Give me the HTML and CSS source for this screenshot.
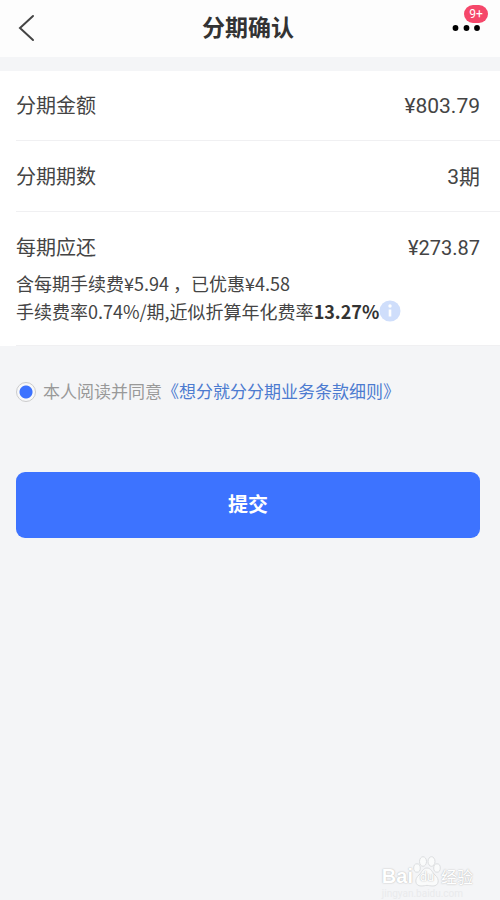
FILE: index.html
```html
<!DOCTYPE html>
<html lang="zh-CN">
<head>
<meta charset="utf-8">
<meta name="viewport" content="width=device-width, initial-scale=1">
<title>分期确认</title>
<link rel="stylesheet" href="styles.css">
</head>
<body>
<header class="topbar">
  <button class="icon-button" type="button" aria-label="返回">
    <svg width="20" height="28" viewBox="0 0 20 28" fill="none" stroke="#444" stroke-width="2" stroke-linecap="round"><path d="M17 2 4 14 17 26"/></svg>
  </button>
  <h1 class="title">分期确认</h1>
  <button class="icon-button more" type="button" aria-label="更多">
    <svg width="28" height="6" viewBox="0 0 28 6" fill="#000"><circle cx="3.500" cy="3" r="2.9"/><circle cx="14.500" cy="3" r="2.9"/><circle cx="25" cy="3" r="2.9"/></svg>
    <span class="badge">9+</span>
  </button>
</header>
<main class="content">
  <section class="card">
    <div class="row"><span>分期金额</span><span class="value">¥803.79</span></div>
    <div class="row"><span>分期期数</span><span class="value">3期</span></div>
    <div class="row"><span>每期应还</span><span>¥273.87</span>
      <p class="detail">含每期手续费¥5.94 ，已优惠¥4.58<br>手续费率0.74%/期,近似折算年化费率<strong>13.27%</strong><button class="info" type="button" aria-label="费率说明"><svg width="22" height="22" viewBox="0 0 22 22"><circle cx="11" cy="11" r="10.5" fill="#cfdefb"/><circle cx="11" cy="6" r="1.7" fill="#fff"/><path d="M11 9.5v7" stroke="#fff" stroke-width="2.6"/></svg></button></p>
    </div>
  </section>
  <form class="form">
    <div class="agreement">
      <input class="radio" type="radio" id="agree" name="agree" checked>
      <label for="agree">本人阅读并同意</label><a class="terms" href="#terms">《想分就分分期业务条款细则》</a>
    </div>
    <button class="submit" type="button">提交</button>
  </form>
</main>
<footer class="watermark">
  <div class="brand">
    <span class="latin">Bai</span>
    <span class="paw">
      <svg width="28" height="32" viewBox="0 0 28 32" fill="#fafbfb" stroke="#dcdee0" stroke-width="1"><ellipse cx="4" cy="12" rx="3.300" ry="4.200"/><ellipse cx="10" cy="5.500" rx="3.500" ry="4.800"/><ellipse cx="18.500" cy="5.500" rx="3.500" ry="4.800"/><ellipse cx="24" cy="12" rx="3.300" ry="4.200"/><path d="M14 12c4 0 5 4 8 7 5 4 4 11-2 11-3 0-4-.6-6-.6s-3 .6-6 .6c-6 0-7-7-2-11 3-3 4-7 8-7Z"/></svg>
      <span class="du">du</span>
    </span>
    <span class="cjk">经验</span>
  </div>
  <div class="site">jingyan.baidu.com</div>
</footer>
</body>
</html>
```
FILE: styles.css
```css
* {
  box-sizing: border-box;
}

body {
  display: flex;
  flex-direction: column;
  min-height: 100vh;
  margin: 0;
  background: #f4f5f7;
  color: #444;
  font-family: Roboto, "Noto Sans CJK SC", sans-serif;
  font-size: 20px;
  line-height: 28px;
}

button {
  padding: 0;
  border: 0;
  background: none;
  font: inherit;
}

.topbar {
  display: flex;
  align-items: center;
  justify-content: space-between;
  height: 57px;
  padding: 0 20px 2px 16px;
  background: #fdfdfd;
}

.icon-button {
  display: flex;
  align-items: center;
  width: 32px;
  height: 32px;
}

.title {
  margin: 0;
  padding-top: 2px;
  color: #333;
  font-size: 23px;
  font-weight: 700;
  line-height: 32px;
}

.more {
  position: relative;
  justify-content: flex-end;
}

.badge {
  position: absolute;
  top: -7px;
  right: -8px;
  width: 24px;
  border-radius: 9px;
  background: #f5476a;
  color: #fff;
  font-size: 12px;
  line-height: 18px;
  text-align: center;
}

.card {
  margin-top: 14px;
  padding-left: 16px;
  background: #fff;
}

.row {
  display: flex;
  flex-wrap: wrap;
  justify-content: space-between;
  padding: 21px 20px 20px 0;
  border-bottom: 1px solid #f0f0f2;
}

.row + .row {
  padding-top: 22px;
}

.value {
  font-size: 21px;
}

.detail {
  width: 100%;
  margin: 7px 0 0;
  font-family: "Noto Sans CJK SC", sans-serif;
  font-size: 18px;
}

.detail strong {
  color: #333;
}

.info {
  display: inline-flex;
  vertical-align: -3px;
}

.form {
  padding: 32px 20px 32px 16px;
}

.agreement {
  display: flex;
  align-items: center;
  color: #999;
  font-size: 17px;
}

.radio {
  width: 20px;
  height: 20px;
  margin: 0 7px 0 0;
  border: 1px solid #ccc;
  border-radius: 50%;
  appearance: none;
  background: radial-gradient(circle, #3c72ff 6px, #f7f8fa 7px);
}

.terms {
  color: #4c7bd0;
  text-decoration: none;
}

.submit {
  display: block;
  width: 100%;
  height: 66px;
  margin-top: 66px;
  border-radius: 9px;
  background: #3d73ff;
  color: #fff;
  font-weight: 700;
}

.watermark {
  align-self: flex-end;
  margin-top: auto;
  padding-right: 27px;
  color: #fff;
}

.brand {
  display: flex;
  align-items: flex-end;
  text-shadow: 0 0 1px #bbb, 0 0 2px #ccc;
}

.latin {
  font-family: "Liberation Sans", sans-serif;
  font-size: 20px;
  font-weight: 700;
  line-height: 24px;
}

.paw {
  position: relative;
  display: flex;
}

.du {
  position: absolute;
  right: 0;
  bottom: 3px;
  left: 0;
  font-size: 13px;
  line-height: 16px;
  text-align: center;
}

.cjk {
  font-size: 16px;
  line-height: 20px;
}

.site {
  color: #e9eaec;
  font-size: 10px;
  line-height: 12px;
}
```
